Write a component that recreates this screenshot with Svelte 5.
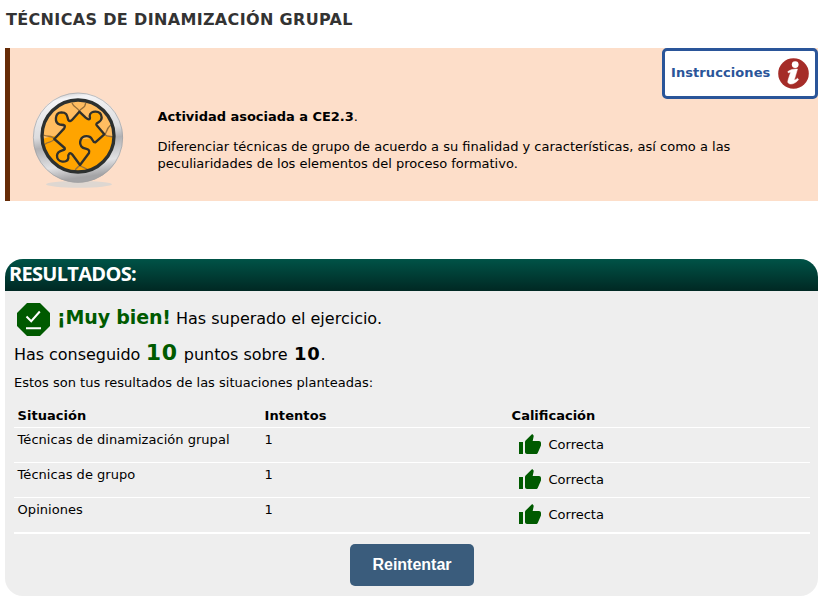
<script>
  const rows = [
    { name: 'Técnicas de dinamización grupal', tries: 1 },
    { name: 'Técnicas de grupo', tries: 1 },
    { name: 'Opiniones', tries: 1 }
  ];
</script>

<main>
  <h1><span>TÉCNICAS DE DINAMIZACIÓN GRUPAL</span></h1>

  <section class="banner">
    <svg class="puzzle" viewBox="0 0 360 360" aria-hidden="true">
      <defs>
        <linearGradient id="metal" x1="0" y1="0" x2="0.15" y2="1">
          <stop offset="0" stop-color="#b0b0b2" />
          <stop offset="0.12" stop-color="#f4f4f6" />
          <stop offset="0.5" stop-color="#dcdcde" />
          <stop offset="0.62" stop-color="#b0b0b3" />
          <stop offset="0.85" stop-color="#e2e2e4" />
          <stop offset="1" stop-color="#a4a4a6" />
        </linearGradient>
        <clipPath id="disc"><circle cx="174" cy="168" r="106" /></clipPath>
      </defs>
      <ellipse cx="177" cy="313" rx="99" ry="10" fill="#ded7d1" />
      <circle cx="174" cy="173" r="135" fill="url(#metal)" />
      <circle cx="174" cy="173" r="134" fill="none" stroke="#a0a0a2" stroke-width="2" />
      <circle cx="174" cy="168" r="109" fill="#ffa400" />
      <g clip-path="url(#disc)">
        <path d="M60 50H290V172C225 158 205 188 160 174C120 161 95 166 60 180Z" fill="#ffbd61" />
        <path d="M178 95C176 82 162 85 156 69M178 95C180 82 196 88 197 69M253 163C262 160 256 149 272 135M253 163C262 172 270 168 285 171M103 177C96 165 84 172 70 165M103 177C96 190 84 183 75 193M180 255C176 262 165 262 164 278M180 255C184 264 200 262 204 272" fill="none" stroke="#98703a" stroke-width="4" />
      </g>
      <path d="M178 95L197 113C207 121 212 119 209 108C210 91 243 89 245 112C246 128 224 127 230 136L253 163L226 187C214 188 222 173 205 169C180 165 174 191 188 203C198 208 211 206 207 219L180 255L158 225C150 214 143 222 145 234C143 251 110 248 111 226C113 207 139 214 134 204L103 177L132 146C139 134 130 135 120 134C102 129 104 98 124 97C143 97 141 110 145 120Q150 127 158 118Z" fill="#ffa400" stroke="#30302b" stroke-width="7" stroke-linejoin="round" />
      <circle cx="174" cy="168" r="108" fill="none" stroke="#2c302f" stroke-width="10" />
    </svg>
    <div class="info">
      <p class="lead"><b>Actividad asociada a CE2.3</b>.</p>
      <p><span class="d1">Diferenciar técnicas de grupo de acuerdo a su finalidad y características, así como a las</span><br /><span class="d2">peculiaridades de los elementos del proceso formativo.</span></p>
    </div>
    <button class="help">
      <span>Instrucciones</span>
      <svg viewBox="0 0 31 31" width="31" height="31" aria-hidden="true">
        <circle cx="15.5" cy="15.5" r="15.3" fill="#a52c28" />
        <circle cx="17.2" cy="6.6" r="3.4" fill="#fff" />
        <path d="M9.8 13.6C12.5 11.4 17 10.7 19.5 11.1L16.3 21.8C16.7 22.4 18.3 21.3 19.4 20.2L20.6 21.5C17.5 26 11.2 27.6 9.8 24.3C9.5 22.5 11.9 16.8 12.5 14.4Q11.6 14.2 10.4 14.9Z" fill="#fff" stroke="#fff" stroke-width="0.5" />
      </svg>
    </button>
  </section>

  <section class="results">
    <h2><span>RESULTADOS:</span></h2>
    <div class="body">
      <p class="verdict">
        <svg viewBox="0 0 33 33" width="33" height="33" aria-hidden="true">
          <path d="M10 0H23L33 10V23L23 33H10L0 23V10Z" fill="#005a00" />
          <path d="M9.5 13.5L14.2 18.2L22.8 8.5M9 25.2H24" fill="none" stroke="#fff" stroke-width="2" />
        </svg>
        <b class="bien">¡Muy bien!</b><span class="sup">Has superado el ejercicio.</span>
      </p>
      <p class="score"><span>Has conseguido</span><b class="got">10</b><span>puntos sobre</span><b class="max">10</b><span class="dot">.</span></p>
      <p class="intro">Estos son tus resultados de las situaciones planteadas:</p>
      <div class="table">
        <div class="row head"><b class="c1">Situación</b><b class="c2">Intentos</b><b class="c3">Calificación</b></div>
        {#each rows as row}
          <div class="row">
            <span class="c1">{row.name}</span>
            <span class="c2">{row.tries}</span>
            <span class="c3 ok">
              <svg viewBox="1 1 22 20" width="22" height="20" aria-hidden="true">
                <path d="M1 21h4V9H1v12zm22-11c0-1.1-.9-2-2-2h-6.31l.95-4.57.03-.32c0-.41-.17-.79-.44-1.06L14.17 1 7.59 7.59C7.22 7.95 7 8.45 7 9v10c0 1.1.9 2 2 2h9c.83 0 1.54-.5 1.84-1.22l3.02-7.05c.09-.23.14-.47.14-.73v-2z" fill="#005a00" />
              </svg>
              <span>Correcta</span>
            </span>
          </div>
        {/each}
      </div>
      <button class="retry">Reintentar</button>
    </div>
  </section>
</main>

<style>
  :global(body) { background: #fff; }
  main {
    box-sizing: border-box;
    width: 824px;
    height: 606px;
    padding: 0 6px 0 5px;
    overflow: hidden;
    font: 13px/17px "DejaVu Sans", Verdana, sans-serif;
    color: #000;
  }
  h1, h2, p { margin: 0; }
  button { font-family: inherit; cursor: pointer; }
  h1 {
    height: 48px;
    padding: 10px 0 0 1px;
    box-sizing: border-box;
    font-size: 16px;
    line-height: 20px;
    letter-spacing: 0.34px;
    color: #333;
  }
  .banner {
    display: flex;
    position: relative;
    box-sizing: border-box;
    height: 153px;
    border-left: 5px solid #662c07;
    background: #fddec9;
  }
  .puzzle { width: 120px; height: 120px; margin: 32px 0 0 10px; flex: none; }
  .info { padding: 60px 0 0 17.5px; white-space: nowrap; }
  .lead { margin-bottom: 13px; }
  .lead b { letter-spacing: -0.03px; }
  .help {
    position: absolute;
    top: 0;
    right: 0;
    box-sizing: border-box;
    width: 156px;
    height: 51px;
    padding: 0 6px;
    display: flex;
    align-items: center;
    justify-content: space-between;
    border: 3px solid #2a5599;
    border-radius: 5px;
    background: #fff;
    color: #2a5599;
    font-weight: bold;
    font-size: 13px;
    letter-spacing: 0.08px;
  }
  .help span { margin-top: -3px; }
  .results {
    margin-top: 58px;
    height: 337px;
    border-radius: 18px;
    overflow: hidden;
    background: #eee;
  }
  h2 {
    height: 32px;
    padding-left: 4px;
    font: 700 20px/30px "Open Sans", sans-serif;
    color: #fff;
    letter-spacing: -0.7px;
    background: linear-gradient(#005347, #002823);
  }
  .body { padding: 12px 8px 0 9px; }
  .verdict { display: flex; height: 33px; padding-left: 3px; font-size: 16px; white-space: nowrap; }
  .bien { width: 112px; margin: 3px 0 0 7px; font-size: 19px; line-height: 22px; letter-spacing: -0.15px; color: #005a00; }
  .sup { margin: 6px 0 0 7px; line-height: 20px; }
  .score { display: flex; align-items: baseline; height: 30px; margin-top: 2px; line-height: 30px; font-size: 16px; letter-spacing: -0.04px; white-space: nowrap; }
  .got { margin: 0 6px 0 5.5px; font-size: 22px; letter-spacing: 0.7px; color: #005a00; }
  .max { margin-left: 6.5px; font-size: 18px; letter-spacing: 0.7px; }
  .intro { margin-top: 6px; }
  .table { margin-top: 12px; border-bottom: 1px solid #fff; }
  .row { display: flex; box-sizing: border-box; height: 35px; border-bottom: 1px solid #fff; padding: 3px 3.6px 0; }
  .row.head { height: 25px; padding-top: 4px; }
  .c1 { width: 247px; letter-spacing: 0.03px; }
  .c2 { width: 247px; letter-spacing: 0.08px; }
  .ok { display: flex; padding: 3px 0 0 7.4px; }
  .ok span { margin: 2px 0 0 7.5px; }
  .retry {
    display: block;
    width: 124px;
    height: 42px;
    margin: 10px 0 0 336px;
    border: 0;
    border-radius: 5px;
    background: #3a5c7c;
    color: #fff;
    font: bold 16px "Liberation Sans", Arial, sans-serif;
  }
</style>
